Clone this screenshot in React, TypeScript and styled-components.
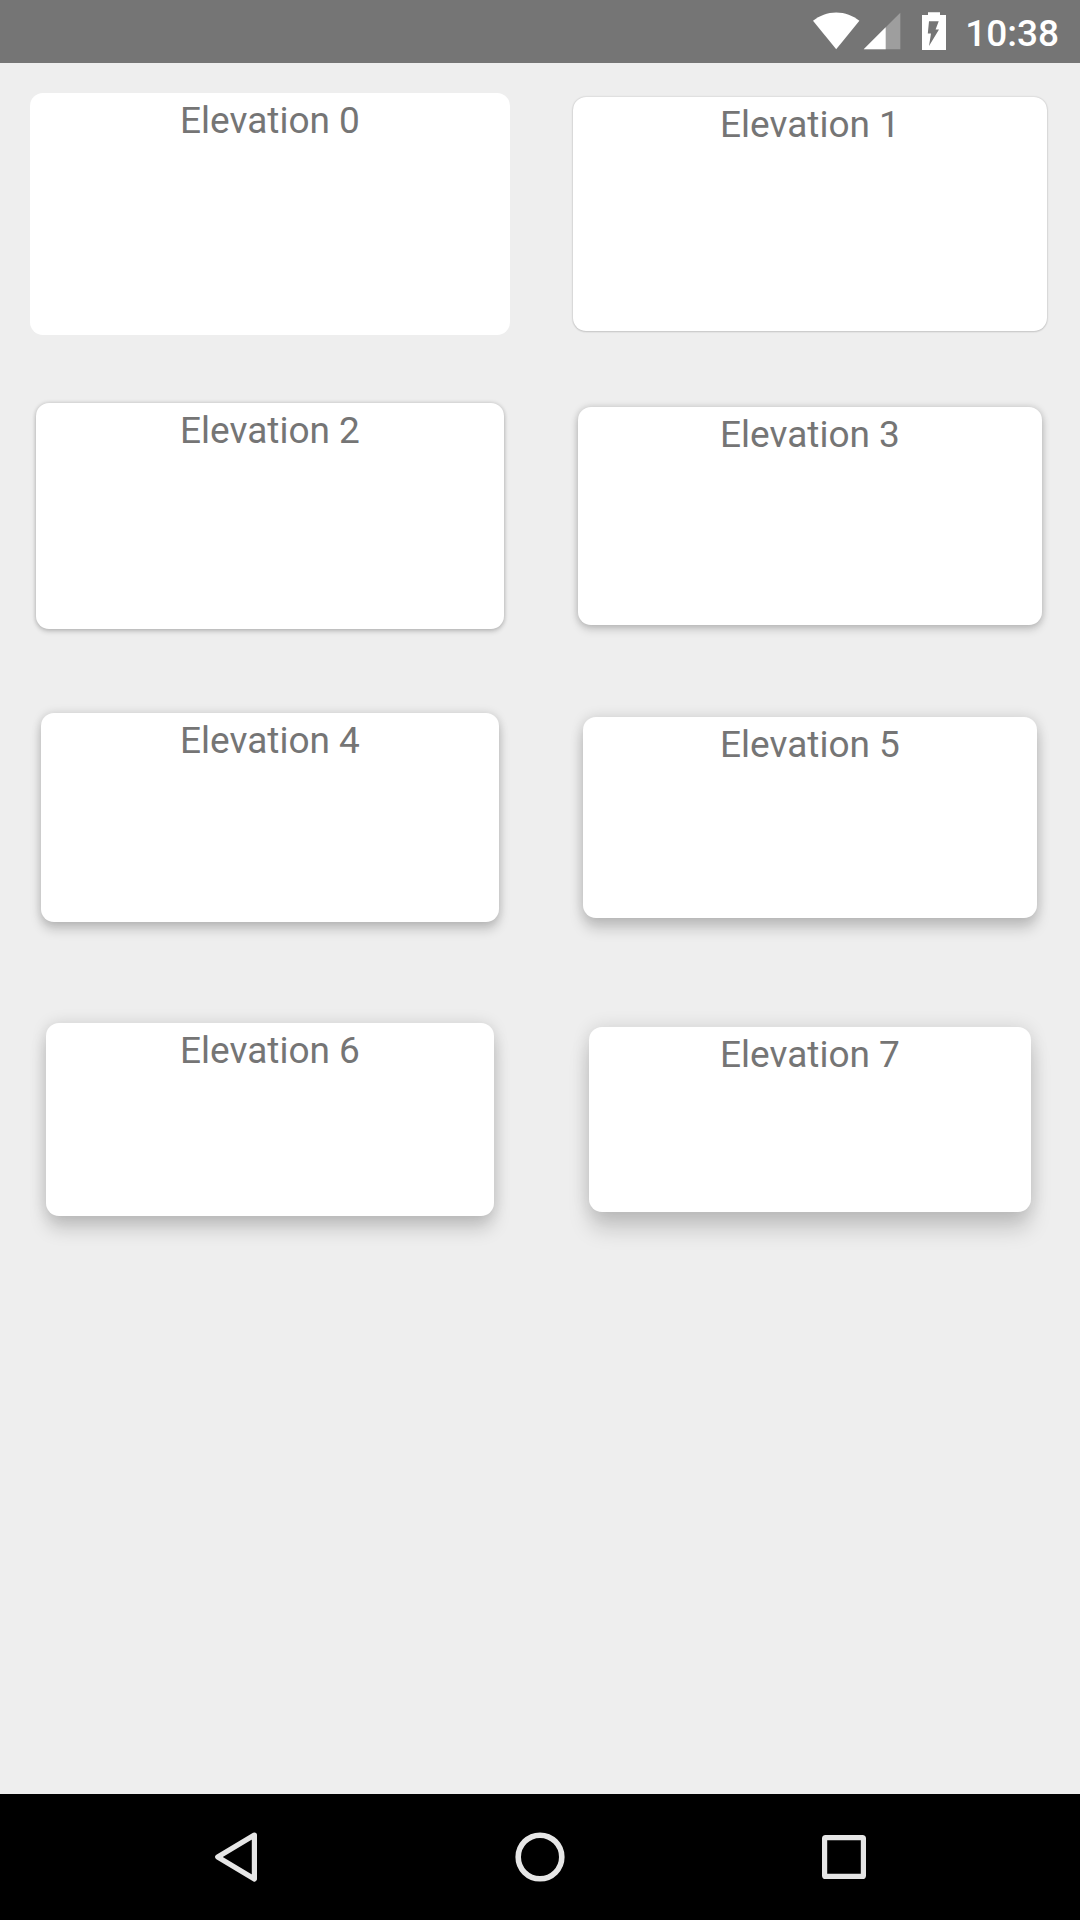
import React from "react";
import styled, { createGlobalStyle } from "styled-components";

const GlobalStyle = createGlobalStyle`
  *, *::before, *::after { box-sizing: border-box; }
  body { margin: 0; background: #eeeeee; }
`;

const Screen = styled.div`
  display: flex;
  flex-direction: column;
  width: 1080px;
  height: 1920px;
  background: #eeeeee;
  font-family: Roboto, "Liberation Sans", sans-serif;
  overflow: hidden;
`;

const StatusBar = styled.header`
  display: flex;
  flex: none;
  justify-content: flex-end;
  height: 63px;
  padding-right: 21px;
  background: #757575;
`;

const StatusIcons = styled.svg`
  display: block;
  flex: none;
  width: 156px;
  height: 63px;
`;

const Clock = styled.time`
  width: 95px;
  padding-top: 12px;
  color: #ffffff;
  font-size: 37px;
  font-weight: 500;
  line-height: 43px;
  text-align: right;
  white-space: nowrap;
`;

const CardGrid = styled.main`
  display: grid;
  flex: 1;
  grid-template-columns: repeat(2, 540px);
  grid-auto-rows: 310px;
  align-content: start;
  justify-items: center;
  align-items: start;
  padding-top: 30px;
`;

interface CardProps {
  $elevation: number;
  $width: number;
  $height: number;
}

/* A tight ambient shadow on all sides plus a key shadow cast downwards. */
const shadows = [
  "none",
  "0 0 2px rgba(0, 0, 0, 0.22), 0 1px 2px rgba(0, 0, 0, 0.12)",
  "0 0 4px rgba(0, 0, 0, 0.2), 0 3px 5px rgba(0, 0, 0, 0.14)",
  "0 0 7px rgba(0, 0, 0, 0.18), 0 5px 8px rgba(0, 0, 0, 0.15)",
  "0 0 10px rgba(0, 0, 0, 0.15), 0 8px 11px rgba(0, 0, 0, 0.17)",
  "0 0 13px rgba(0, 0, 0, 0.14), 0 11px 14px rgba(0, 0, 0, 0.17)",
  "0 0 15px rgba(0, 0, 0, 0.13), 0 14px 18px -1px rgba(0, 0, 0, 0.17)",
  "0 0 18px rgba(0, 0, 0, 0.12), 0 18px 21px -1px rgba(0, 0, 0, 0.17)",
];

const Card = styled.section<CardProps>`
  width: ${(p) => p.$width}px;
  height: ${(p) => p.$height}px;
  margin-top: ${(p) => (p.$elevation % 2 ? 4 : 0)}px;
  padding-top: 6px;
  border-radius: 13px;
  background: #ffffff;
  box-shadow: ${(p) => shadows[p.$elevation]};
`;

const CardLabel = styled.div`
  color: #757575;
  font-size: 37px;
  line-height: 43px;
  text-align: center;
  white-space: nowrap;
`;

const NavBar = styled.nav`
  display: grid;
  flex: none;
  grid-template-columns: repeat(3, 304px);
  justify-content: center;
  height: 126px;
  background: #000000;
`;

const NavButton = styled.button`
  display: flex;
  align-items: center;
  justify-content: center;
  height: 126px;
  padding: 0;
  border: 0;
  background: transparent;
`;

const NavIcon = styled.svg`
  display: block;
  width: 60px;
  height: 60px;
  fill: none;
  stroke: #e6e6e6;
  stroke-linejoin: round;
`;

const cards = [
  { width: 480, height: 242 },
  { width: 474, height: 234 },
  { width: 468, height: 226 },
  { width: 464, height: 218 },
  { width: 458, height: 209 },
  { width: 454, height: 201 },
  { width: 448, height: 193 },
  { width: 442, height: 185 },
];

export default function App() {
  return (
    <>
      <GlobalStyle />
      <Screen>
        <StatusBar>
          <StatusIcons viewBox="-10 0 156 63" fill="#ffffff" aria-hidden="true">
            <path d="M-5 20.8C1.5 15.7 9.4 12.5 18.2 12.5S34.9 15.7 41.4 20.8L18.2 49.3Z" />
            <path d="M82.3 12.7V49.3H45.7Z" opacity="0.3" />
            <path d="M67.7 27.3V49.3H45.7Z" />
            <path
              fillRule="evenodd"
              d="M110 12.3h12V15h6v35h-24V15h6ZM111 21.3L109.8 33.5H113L111 46L121 29.5H117.6L120.7 21.3Z"
            />
          </StatusIcons>
          <Clock>10:38</Clock>
        </StatusBar>
        <CardGrid>
          {cards.map((card, elevation) => (
            <Card key={elevation} $elevation={elevation} $width={card.width} $height={card.height}>
              <CardLabel>Elevation {elevation}</CardLabel>
            </Card>
          ))}
        </CardGrid>
        <NavBar>
          <NavButton aria-label="Back">
            <NavIcon viewBox="0 0 60 60">
              <path d="M48.4 8L11.7 30L48.4 52Z" strokeWidth="5.2" />
            </NavIcon>
          </NavButton>
          <NavButton aria-label="Home">
            <NavIcon viewBox="0 0 60 60">
              <circle cx="30" cy="30" r="21.8" strokeWidth="5.6" />
            </NavIcon>
          </NavButton>
          <NavButton aria-label="Recent apps">
            <NavIcon viewBox="0 0 60 60">
              <rect x="10.6" y="10.6" width="38.8" height="38.8" rx="1" strokeWidth="5.2" />
            </NavIcon>
          </NavButton>
        </NavBar>
      </Screen>
    </>
  );
}
